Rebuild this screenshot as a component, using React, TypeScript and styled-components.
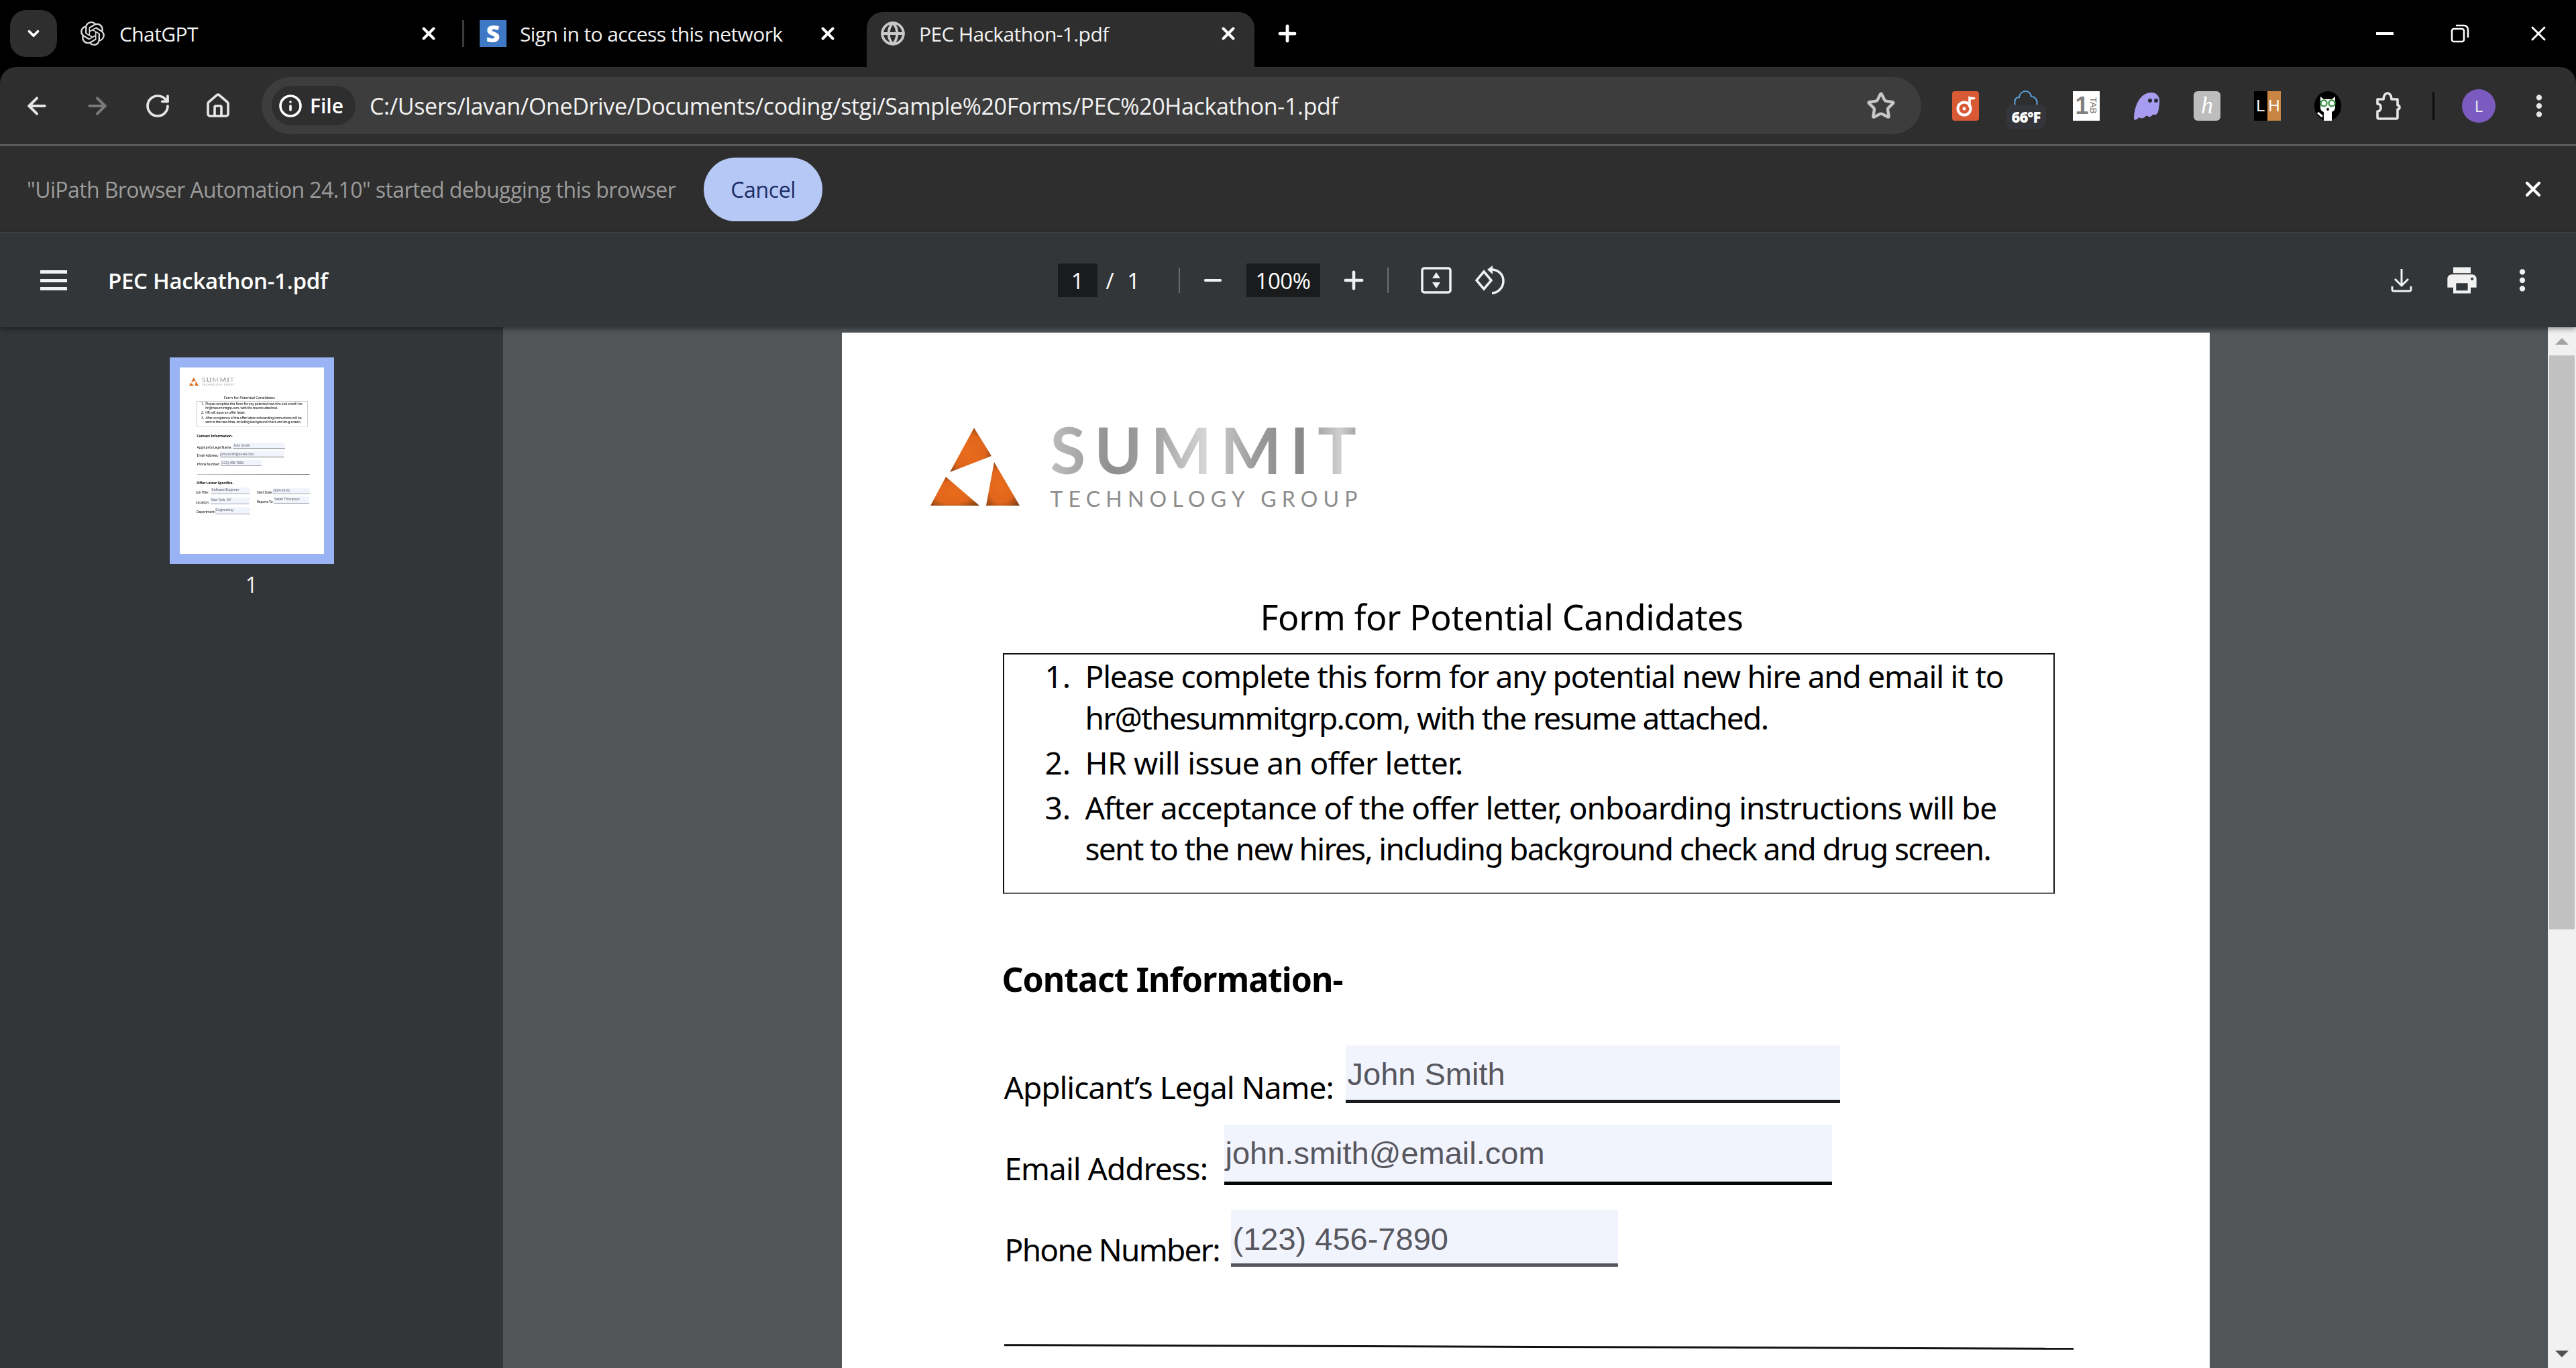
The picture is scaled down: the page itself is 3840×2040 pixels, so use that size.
import React from "react";
import styled, { createGlobalStyle } from "styled-components";
import { ArrowLeft, ArrowRight, ChevronDown, Globe, House, Info, Minus, Plus, RotateCw, Star, X } from "lucide-react";
import { SiOpenai } from "react-icons/si";
import { MdMoreVert, MdPrint } from "react-icons/md";

const GlobalStyle = createGlobalStyle`
  html, body { margin: 0; padding: 0; background: #000; }
  * { box-sizing: border-box; }
`;

const UI_FONT = `"Open Sans", "Noto Sans", sans-serif`;
const DOC_FONT = `"Noto Sans", "DejaVu Sans", sans-serif`;

const Screen = styled.div`
  width: 3840px;
  height: 2040px;
  overflow: hidden;
  display: flex;
  flex-direction: column;
  font-family: ${UI_FONT};
  color: #fff;
`;

/* tab strip */
const TabStrip = styled.div`
  height: 100px;
  flex: none;
  background: #000;
  display: flex;
  align-items: flex-end;
  padding-left: 15px;
`;

const TabMenu = styled.div`
  width: 70px;
  height: 70px;
  margin-bottom: 15px;
  margin-right: 15px;
  border-radius: 24px;
  background: #2e2e2e;
  display: flex;
  align-items: center;
  justify-content: center;
`;

const Tab = styled.div<{ $active?: boolean; $width: number; $padEnd: number }>`
  width: ${(p) => p.$width}px;
  height: 82px;
  flex: none;
  display: flex;
  align-items: center;
  padding: 0 ${(p) => p.$padEnd}px 18px 20px;
  background: ${(p) => (p.$active ? "#2e2e2e" : "transparent")};
  border-radius: 24px 24px 0 0;
`;

const TabTitle = styled.span<{ $gap: number }>`
  flex: 1;
  margin-left: ${(p) => p.$gap}px;
  font-size: 30px;
  letter-spacing: -0.6px;
  white-space: nowrap;
  color: #f2f2f2;
`;

const TabDivider = styled.div`
  width: 3px;
  height: 40px;
  margin: 0 3px 30px 11px;
  background: #3c3c3c;
  flex: none;
`;

const SquareFavicon = styled.div`
  width: 40px;
  height: 40px;
  flex: none;
  background: #3f78c4;
  color: #fff;
  font-weight: 800;
  font-size: 36px;
  line-height: 40px;
  text-align: center;
`;

const NewTab = styled.div`
  margin: 0 0 28px 30px;
  height: 44px;
  display: flex;
  align-items: center;
`;

const WindowControls = styled.div`
  margin-left: auto;
  display: flex;
  align-items: center;
  height: 100px;
  padding-right: 38px;
  gap: 85px;
`;

const MinimizeBar = styled.div`
  width: 26px;
  height: 4px;
  background: #fff;
`;

/* address bar */
const Toolbar = styled.div`
  height: 115px;
  flex: none;
  background: #2e2e2e;
  border-radius: 24px 24px 0 0;
  display: flex;
  align-items: center;
  padding-left: 35px;
`;

const NavIcons = styled.div`
  display: flex;
  align-items: center;
  gap: 50px;
  color: #e6e6e6;
`;

const Omnibox = styled.div`
  width: 2474px;
  height: 85px;
  margin-left: 45px;
  background: #3d3d3d;
  border-radius: 43px;
  display: flex;
  align-items: center;
  padding: 0 38px 0 15px;
  color: #c7c7c7;
`;

const FileChip = styled.div`
  width: 125px;
  height: 59px;
  flex: none;
  border-radius: 30px;
  background: #2e2e2e;
  color: #fff;
  display: flex;
  align-items: center;
  padding-left: 10px;
  gap: 11px;
  font-size: 30px;
  font-weight: 600;
`;

const Url = styled.div`
  margin-left: 21px;
  flex: 1;
  font-size: 34px;
  letter-spacing: -0.35px;
  white-space: nowrap;
  color: #f2f2f2;
`;

const Extensions = styled.div`
  display: flex;
  align-items: center;
  margin-left: 21px;
`;

const Ext = styled.div<{ $width: number }>`
  width: ${(p) => p.$width}px;
  flex: none;
  display: flex;
  justify-content: center;
`;

const OneTab = styled.div`
  width: 40px;
  height: 44px;
  background: #fff;
  color: #808080;
  display: flex;
  align-items: center;
  justify-content: center;
  font-family: "Liberation Sans", sans-serif;
  font-weight: 700;
  line-height: 1;
  overflow: hidden;
`;

const OneTabWord = styled.span`
  writing-mode: vertical-rl;
  font-size: 13px;
  font-weight: 400;
  color: #666;
`;

const OneTabNum = styled.span`
  font-size: 36px;
`;

const Honey = styled.div`
  width: 40px;
  height: 44px;
  border-radius: 6px;
  background: #bdbdbd;
  color: #fff;
  text-align: center;
  font-family: "Liberation Serif", serif;
  font-style: italic;
  font-size: 36px;
  line-height: 42px;
`;

const LhBadge = styled.div`
  width: 40px;
  height: 44px;
  display: flex;
  font-family: "Liberation Sans", sans-serif;
  font-size: 24px;
  line-height: 44px;
  text-align: center;
  color: #fff;
`;

const LhCell = styled.span<{ $bg: string }>`
  flex: 1;
  background: ${(p) => p.$bg};
`;

const WeatherStack = styled.div`
  display: flex;
  flex-direction: column;
  align-items: center;
  margin-top: 10px;
`;

const WeatherPill = styled.div`
  margin-top: -2px;
  width: 60px;
  height: 36px;
  border-radius: 9px;
  background: #33353b;
  font-size: 22px;
  font-weight: 800;
  letter-spacing: -1px;
  line-height: 36px;
  text-align: center;
`;

const ToolbarRule = styled.div`
  width: 3px;
  height: 42px;
  background: #0d0d0d;
`;

const Avatar = styled.div`
  width: 50px;
  height: 50px;
  border-radius: 50%;
  background: #7c5bc0;
  font-size: 24px;
  line-height: 50px;
  text-align: center;
  color: #eee;
`;

const ToolbarEdge = styled.div`
  height: 3px;
  flex: none;
  background: #5a5a5a;
`;

/* debugging bar */
const InfoBar = styled.div`
  height: 130px;
  flex: none;
  background: #2e2e2e;
  border-bottom: 2px solid #454545;
  display: flex;
  align-items: center;
  padding: 0 46px 0 40px;
`;

const InfoText = styled.span`
  font-size: 32px;
  letter-spacing: -0.6px;
  color: #9b9b9b;
  white-space: nowrap;
`;

const CancelButton = styled.div`
  margin-left: 42px;
  width: 177px;
  height: 95px;
  border-radius: 48px;
  background: #b6c8f6;
  color: #1c2c66;
  font-size: 32px;
  font-weight: 500;
  letter-spacing: -0.4px;
  display: flex;
  align-items: center;
  justify-content: center;
`;

const InfoClose = styled.div`
  margin-left: auto;
  display: flex;
`;

/* pdf viewer */
const PdfToolbar = styled.div`
  height: 140px;
  flex: none;
  background: #323639;
  display: grid;
  grid-template-columns: 1fr auto 1fr;
  align-items: center;
  padding: 0 60px;
  position: relative;
  z-index: 2;
  box-shadow: 0 2px 8px rgba(0, 0, 0, 0.45);
`;

const PdfTitleGroup = styled.div`
  display: flex;
  align-items: center;
  gap: 61px;
`;

const Hamburger = styled.div`
  width: 40px;
  height: 30px;
  border-top: 5px solid #f1f1f1;
  border-bottom: 5px solid #f1f1f1;
  display: flex;
  align-items: center;

  &::before {
    content: "";
    display: block;
    width: 100%;
    height: 5px;
    background: #f1f1f1;
  }
`;

const PdfTitle = styled.span`
  font-size: 33px;
  font-weight: 600;
  letter-spacing: -0.3px;
  white-space: nowrap;
`;

const PdfCenter = styled.div`
  display: flex;
  align-items: center;
  margin-left: -32px;
  font-size: 33px;
`;

const NumBox = styled.div<{ $width: number }>`
  width: ${(p) => p.$width}px;
  height: 50px;
  background: #191b1c;
  display: flex;
  align-items: center;
  justify-content: center;
  letter-spacing: -0.5px;
`;

const PageOf = styled.span`
  margin-left: 13px;
  width: 108px;
  word-spacing: 11px;
`;

const ToolbarSep = styled.div`
  width: 2px;
  height: 38px;
  background: #6a6d70;
`;

const IconCell = styled.div<{ $width: number }>`
  width: ${(p) => p.$width}px;
  display: flex;
  justify-content: center;
  color: #f1f1f1;
`;

const PdfActions = styled.div`
  display: flex;
  align-items: center;
  justify-content: flex-end;
  margin-right: -25px;
`;

const ViewerBody = styled.div`
  flex: 1;
  min-height: 0;
  display: flex;
`;

const Sidebar = styled.div`
  width: 750px;
  flex: none;
  background: #323639;
  display: flex;
  flex-direction: column;
  align-items: center;
  padding-top: 45px;
`;

const ThumbFrame = styled.div`
  width: 245px;
  height: 308px;
  border: 15px solid #9ab3f5;
  overflow: hidden;
  background: #fff;
`;

const ThumbScale = styled.div`
  width: 2039px;
  transform: scale(0.10544);
  transform-origin: top left;
  filter: blur(2px);
`;

const ThumbLabel = styled.div`
  margin-top: 9px;
  font-size: 32px;
  color: #f1f1f1;
`;

const Canvas = styled.div`
  flex: 1;
  min-width: 0;
  background: #525659;
  padding-top: 8px;
  display: flex;
  justify-content: center;
  overflow: hidden;
`;

const Scrollbar = styled.div`
  width: 42px;
  flex: none;
  background: #f1f1f1;
  display: flex;
  flex-direction: column;
  align-items: center;
  justify-content: space-between;
  padding: 0 2px;
`;

const ScrollArrow = styled.div<{ $down?: boolean }>`
  height: 42px;
  flex: none;
  display: flex;
  align-items: center;
  justify-content: center;

  &::before {
    content: "";
    border-left: 10px solid transparent;
    border-right: 10px solid transparent;
    ${(p) => (p.$down ? "border-top: 10px solid #505050;" : "border-bottom: 10px solid #a3a3a3;")}
  }
`;

const ScrollThumb = styled.div`
  width: 100%;
  height: 856px;
  background: #c1c1c1;
  flex: none;
`;

const ScrollFill = styled.div`
  flex: 1;
`;

/* the pdf page itself */
const Page = styled.div`
  width: 2039px;
  height: 2639px;
  flex: none;
  background: #fff;
  color: #000;
  font-family: ${DOC_FONT};
  padding-top: 142px;
  overflow: hidden;
`;

const LogoRow = styled.div`
  display: flex;
  align-items: flex-start;
  margin-left: 132px;
  height: 121px;
`;

const LogoWords = styled.div`
  margin: -16px 0 0 46px;
  font-family: Lato, sans-serif;
  display: flex;
  flex-direction: column;
`;

const LogoName = styled.div`
  font-size: 96px;
  line-height: 96px;
  letter-spacing: 13px;
  font-weight: 700;
  background: linear-gradient(90deg, #bdbdbd 0%, #8e8e8e 20%, #a8a8a8 35%, #d8d8d8 50%, #9a9a9a 65%, #8a8a8a 80%, #cfcfcf 92%, #8f8f8f 100%);
  -webkit-background-clip: text;
  background-clip: text;
  color: transparent;
`;

const LogoTag = styled.div`
  margin-top: 10px;
  font-size: 32px;
  line-height: 32px;
  letter-spacing: 8.2px;
  color: #8d8d8d;
  white-space: nowrap;
`;

const FormTitle = styled.div`
  width: 1968px;
  margin-top: 135px;
  text-align: center;
  font-size: 52px;
  line-height: 52px;
  letter-spacing: -0.4px;
`;

const Instructions = styled.div`
  width: 1568px;
  height: 359px;
  margin: 28px 0 0 240px;
  padding-top: 2px;
  border: 2px solid #111;
  border-bottom-color: #666;
`;

const Step = styled.div`
  display: flex;
  margin-bottom: 5.5px;
  font-size: 46px;
  line-height: 61.5px;
  white-space: nowrap;
`;

const StepNum = styled.span`
  width: 60px;
  margin-left: 61px;
  flex: none;
`;

const StepLine = styled.div<{ $track: number }>`
  letter-spacing: ${(p) => p.$track}px;
`;

const SectionHead = styled.div<{ $top: number }>`
  margin: ${(p) => p.$top}px 0 0 239px;
  font-size: 50px;
  line-height: 50px;
  font-weight: 700;
  letter-spacing: -1px;
`;

const FieldRow = styled.div<{ $top: number; $left: number }>`
  display: flex;
  align-items: flex-start;
  margin: ${(p) => p.$top}px 0 0 ${(p) => p.$left}px;
`;

const FieldLabel = styled.span<{ $drop: number; $width: number; $start?: number; $track?: number }>`
  flex: none;
  width: ${(p) => p.$width}px;
  margin-top: ${(p) => p.$drop}px;
  margin-left: ${(p) => p.$start ?? 0}px;
  font-size: 46px;
  line-height: 46px;
  letter-spacing: ${(p) => p.$track ?? -1}px;
  white-space: nowrap;
`;

const FieldBox = styled.div<{ $width: number; $height: number; $textTop: number; $textLeft: number; $line: string; $shift?: number }>`
  flex: none;
  width: ${(p) => p.$width}px;
  height: ${(p) => p.$height}px;
  margin-top: ${(p) => p.$shift ?? 0}px;
  padding: ${(p) => p.$textTop}px 0 0 ${(p) => p.$textLeft}px;
  background: #f2f4fd;
  border-bottom: 5px solid ${(p) => p.$line};
  font-family: "Liberation Sans", Arial, sans-serif;
  font-size: 47px;
  line-height: 47px;
  color: #57575f;
  white-space: nowrap;
`;

const PageRule = styled.div`
  width: 1594px;
  height: 3px;
  margin: 118px 0 0 242px;
  background: #111;
  transform: rotate(0.2deg);
`;

const ChromeSvg = styled.svg`
  display: block;
  flex: none;
`;

const SummitMark = () => (
  <ChromeSvg width="133" height="116" viewBox="0 0 133 116">
    <defs>
      <radialGradient id="summitFill" cx="45%" cy="55%" r="70%">
        <stop offset="0%" stopColor="#ea6c1c" />
        <stop offset="55%" stopColor="#e0661c" />
        <stop offset="100%" stopColor="#6f3812" />
      </radialGradient>
    </defs>
    <polygon points="65,0 91,42 29,66" fill="url(#summitFill)" />
    <polygon points="95,51 133,116 83,116" fill="url(#summitFill)" />
    <polygon points="23,73 73,116 0,116" fill="url(#summitFill)" />
  </ChromeSvg>
);

const PdfPage = () => (
  <Page>
    <LogoRow>
      <SummitMark />
      <LogoWords>
        <LogoName>SUMMIT</LogoName>
        <LogoTag>TECHNOLOGY GROUP</LogoTag>
      </LogoWords>
    </LogoRow>
    <FormTitle>Form for Potential Candidates</FormTitle>
    <Instructions>
      <Step>
        <StepNum>1.</StepNum>
        <div>
          <StepLine $track={-1.2}>Please complete this form for any potential new hire and email it to</StepLine>
          <StepLine $track={-1.68}>hr@thesummitgrp.com, with the resume attached.</StepLine>
        </div>
      </Step>
      <Step>
        <StepNum>2.</StepNum>
        <StepLine $track={-0.7}>HR will issue an offer letter.</StepLine>
      </Step>
      <Step>
        <StepNum>3.</StepNum>
        <div>
          <StepLine $track={-1.06}>After acceptance of the offer letter, onboarding instructions will be</StepLine>
          <StepLine $track={-1.68}>sent to the new hires, including background check and drug screen.</StepLine>
        </div>
      </Step>
    </Instructions>
    <SectionHead $top={102}>Contact Information-</SectionHead>
    <FieldRow $top={74} $left={242}>
      <FieldLabel $drop={39} $width={509}>Applicant’s Legal Name:</FieldLabel>
      <FieldBox $width={737} $height={86} $textTop={19} $textLeft={3} $line="#1a1a1f">John Smith</FieldBox>
    </FieldRow>
    <FieldRow $top={32} $left={243}>
      <FieldLabel $drop={42} $width={327}>Email Address:</FieldLabel>
      <FieldBox $width={906} $height={90} $textTop={19} $textLeft={2} $line="#050505">john.smith@email.com</FieldBox>
    </FieldRow>
    <FieldRow $top={37} $left={243}>
      <FieldLabel $drop={36} $width={337} $track={-1.7}>Phone Number:</FieldLabel>
      <FieldBox $width={577} $height={85} $textTop={20} $textLeft={3} $line="#55555b">(123) 456-7890</FieldBox>
    </FieldRow>
    <PageRule />
    <SectionHead $top={89}>Offer Letter Specifics-</SectionHead>
    <FieldRow $top={44} $left={231}>
      <FieldLabel $drop={42} $width={215}>Job Title:</FieldLabel>
      <FieldBox $width={544} $height={92} $textTop={8} $textLeft={3} $line="#55555b">Software Engineer</FieldBox>
      <FieldLabel $drop={42} $width={225} $start={100}>Start Date:</FieldLabel>
      <FieldBox $width={522} $height={79} $shift={13} $textTop={8} $textLeft={3} $line="#55555b">2024-10-01</FieldBox>
    </FieldRow>
    <FieldRow $top={48} $left={228}>
      <FieldLabel $drop={44} $width={208}>Location:</FieldLabel>
      <FieldBox $width={547} $height={94} $textTop={10} $textLeft={3} $line="#55555b">New York, NY</FieldBox>
      <FieldLabel $drop={34} $width={241} $start={107}>Reports To:</FieldLabel>
      <FieldBox $width={499} $height={94} $shift={-10} $textTop={10} $textLeft={3} $line="#55555b">Sarah Thompson</FieldBox>
    </FieldRow>
    <FieldRow $top={48} $left={237}>
      <FieldLabel $drop={41} $width={266}>Department:</FieldLabel>
      <FieldBox $width={490} $height={95} $textTop={10} $textLeft={3} $line="#55555b">Engineering</FieldBox>
    </FieldRow>
  </Page>
);

const RestoreIcon = () => (
  <ChromeSvg width="28" height="28" viewBox="0 0 28 28" fill="none" stroke="#fff" strokeWidth="2.6">
    <rect x="2" y="7" width="18" height="19" rx="3" />
    <path d="M8 2h12a6 6 0 0 1 6 6v12" />
  </ChromeSvg>
);

const MusicIcon = () => (
  <ChromeSvg width="40" height="44" viewBox="0 0 40 44">
    <rect width="40" height="44" rx="4" fill="#d75a34" />
    <circle cx="18" cy="26" r="9.5" fill="none" stroke="#fff" strokeWidth="4" />
    <circle cx="18" cy="26" r="2.5" fill="#fff" />
    <path d="M26 24V10c3 1 6 1 8 0" fill="none" stroke="#fff" strokeWidth="3.5" />
  </ChromeSvg>
);

const GhostIcon = () => (
  <ChromeSvg width="42" height="44" viewBox="0 0 42 44">
    <path d="M2 42C2 24 10 2 28 2c9 0 13 7 12 16-1 8-1 14-5 17-2 1-3-1-5 0-2 2-3 4-6 3-2-1-3-2-5 0-3 3-7 3-9 1-3 2-5 5-8 3z" fill="#a89cf0" />
    <circle cx="26" cy="14" r="3" fill="#2b2b3a" />
    <circle cx="35" cy="14" r="3" fill="#2b2b3a" />
  </ChromeSvg>
);

const CloudIcon = () => (
  <ChromeSvg width="38" height="24" viewBox="0 0 38 24" fill="none" stroke="#5c9bd6" strokeWidth="2.2">
    <path d="M3 23c-2-6 0-12 6-12 1-6 5-9 9-9 5 0 8 3 9 8 6 0 10 6 8 13" />
  </ChromeSvg>
);

const CatIcon = () => (
  <ChromeSvg width="40" height="44" viewBox="0 0 40 44">
    <ellipse cx="20" cy="22" rx="20" ry="22" fill="#000" />
    <path d="M9 8l5 4h12l5-4v16c0 4-3 6-5 7v13H14V31c-3-1-5-3-5-7z" fill="#fff" />
    <path d="M5 32l7 6" stroke="#fff" strokeWidth="3" />
    <circle cx="14" cy="18" r="4.5" fill="none" stroke="#3f9b4c" strokeWidth="2.5" />
    <circle cx="26" cy="18" r="4.5" fill="none" stroke="#3f9b4c" strokeWidth="2.5" />
    <circle cx="20" cy="27" r="2" fill="#000" />
  </ChromeSvg>
);

const PuzzleIcon = () => (
  <ChromeSvg width="38" height="44" viewBox="0 0 38 44" fill="none" stroke="#e6e6e6" strokeWidth="3.6" strokeLinejoin="round">
    <path d="M3 12h9c0-4 2-9 6-9s6 5 6 9h9v9c2 0 3 1 3 3s-1 3-3 3v12a2 2 0 0 1-2 2H5a2 2 0 0 1-2-2V30c3 0 5-2 5-6s-2-5-5-5z" />
  </ChromeSvg>
);

const FitIcon = () => (
  <ChromeSvg width="46" height="40" viewBox="0 0 46 40">
    <rect x="2" y="2" width="42" height="36" rx="3" fill="none" stroke="#f1f1f1" strokeWidth="3.5" />
    <path d="M23 8l6 9H17zM23 32l-6-9h12z" fill="#f1f1f1" />
  </ChromeSvg>
);

const RotateIcon = () => (
  <ChromeSvg width="46" height="46" viewBox="0 0 46 46" fill="none" stroke="#f1f1f1" strokeWidth="3.5">
    <path d="M13 14l11 13-11 13L2 27z" transform="translate(0 -4)" />
    <path d="M22 7c12-1 20 7 20 17s-8 18-17 18" />
    <path d="M26 1l-8 6 8 7z" fill="#f1f1f1" stroke="none" />
  </ChromeSvg>
);

const DownloadIcon = () => (
  <ChromeSvg width="32" height="36" viewBox="0 0 32 36" fill="none" stroke="#f1f1f1" strokeWidth="3">
    <path d="M16 1v25M6 16l10 10 10-10" />
    <path d="M2 27v5c0 1 1 2 2 2h24c1 0 2-1 2-2v-5" />
  </ChromeSvg>
);

const App = () => (
  <Screen>
    <GlobalStyle />
    <TabStrip>
      <TabMenu>
        <ChevronDown size={26} strokeWidth={3.5} />
      </TabMenu>
      <Tab $width={578} $padEnd={24}>
        <SiOpenai size={36} color="#d8d8d8" />
        <TabTitle $gap={22}>ChatGPT</TabTitle>
        <X size={30} strokeWidth={3.2} />
      </Tab>
      <TabDivider />
      <Tab $width={597} $padEnd={43}>
        <SquareFavicon>S</SquareFavicon>
        <TabTitle $gap={20}>Sign in to access this network</TabTitle>
        <X size={30} strokeWidth={3.2} />
      </Tab>
      <Tab $active $width={578} $padEnd={24}>
        <Globe size={38} color="#c8c8c8" strokeWidth={2.4} />
        <TabTitle $gap={20}>PEC Hackathon-1.pdf</TabTitle>
        <X size={30} strokeWidth={3.2} />
      </Tab>
      <NewTab>
        <Plus size={38} strokeWidth={3} />
      </NewTab>
      <WindowControls>
        <MinimizeBar />
        <RestoreIcon />
        <X size={36} strokeWidth={2} />
      </WindowControls>
    </TabStrip>

    <Toolbar>
      <NavIcons>
        <ArrowLeft size={40} strokeWidth={2.4} />
        <ArrowRight size={40} strokeWidth={2.4} color="#7a7a7a" />
        <RotateCw size={40} strokeWidth={2.2} />
        <House size={40} strokeWidth={2.2} />
      </NavIcons>
      <Omnibox>
        <FileChip>
          <Info size={36} strokeWidth={2.4} />
          File
        </FileChip>
        <Url>C:/Users/lavan/OneDrive/Documents/coding/stgi/Sample%20Forms/PEC%20Hackathon-1.pdf</Url>
        <Star size={44} strokeWidth={2.4} />
      </Omnibox>
      <Extensions>
        <Ext $width={90}><MusicIcon /></Ext>
        <Ext $width={90}>
          <WeatherStack>
            <CloudIcon />
            <WeatherPill>66°F</WeatherPill>
          </WeatherStack>
        </Ext>
        <Ext $width={90}>
          <OneTab>
            <OneTabNum>1</OneTabNum>
            <OneTabWord>TAB</OneTabWord>
          </OneTab>
        </Ext>
        <Ext $width={90}><GhostIcon /></Ext>
        <Ext $width={90}><Honey>h</Honey></Ext>
        <Ext $width={90}>
          <LhBadge>
            <LhCell $bg="#000">L</LhCell>
            <LhCell $bg="#c98543">H</LhCell>
          </LhBadge>
        </Ext>
        <Ext $width={90}><CatIcon /></Ext>
        <Ext $width={90}><PuzzleIcon /></Ext>
        <Ext $width={44}><ToolbarRule /></Ext>
        <Ext $width={92}><Avatar>L</Avatar></Ext>
        <Ext $width={88}><MdMoreVert size={50} color="#e6e6e6" /></Ext>
      </Extensions>
    </Toolbar>
    <ToolbarEdge />

    <InfoBar>
      <InfoText>"UiPath Browser Automation 24.10" started debugging this browser</InfoText>
      <CancelButton>Cancel</CancelButton>
      <InfoClose>
        <X size={36} strokeWidth={2.8} />
      </InfoClose>
    </InfoBar>

    <PdfToolbar>
      <PdfTitleGroup>
        <Hamburger />
        <PdfTitle>PEC Hackathon-1.pdf</PdfTitle>
      </PdfTitleGroup>
      <PdfCenter>
        <NumBox $width={59}>1</NumBox>
        <PageOf>/ 1</PageOf>
        <ToolbarSep />
        <IconCell $width={99}><Minus size={38} strokeWidth={2.6} /></IconCell>
        <NumBox $width={110}>100%</NumBox>
        <IconCell $width={100}><Plus size={42} strokeWidth={2.6} /></IconCell>
        <ToolbarSep />
        <IconCell $width={142}><FitIcon /></IconCell>
        <IconCell $width={20}><RotateIcon /></IconCell>
      </PdfCenter>
      <PdfActions>
        <IconCell $width={90}><DownloadIcon /></IconCell>
        <IconCell $width={90}><MdPrint size={52} /></IconCell>
        <IconCell $width={90}><MdMoreVert size={50} /></IconCell>
      </PdfActions>
    </PdfToolbar>

    <ViewerBody>
      <Sidebar>
        <ThumbFrame>
          <ThumbScale>
            <PdfPage />
          </ThumbScale>
        </ThumbFrame>
        <ThumbLabel>1</ThumbLabel>
      </Sidebar>
      <Canvas>
        <PdfPage />
      </Canvas>
      <Scrollbar>
        <ScrollArrow />
        <ScrollThumb />
        <ScrollFill />
        <ScrollArrow $down />
      </Scrollbar>
    </ViewerBody>
  </Screen>
);

export default App;
